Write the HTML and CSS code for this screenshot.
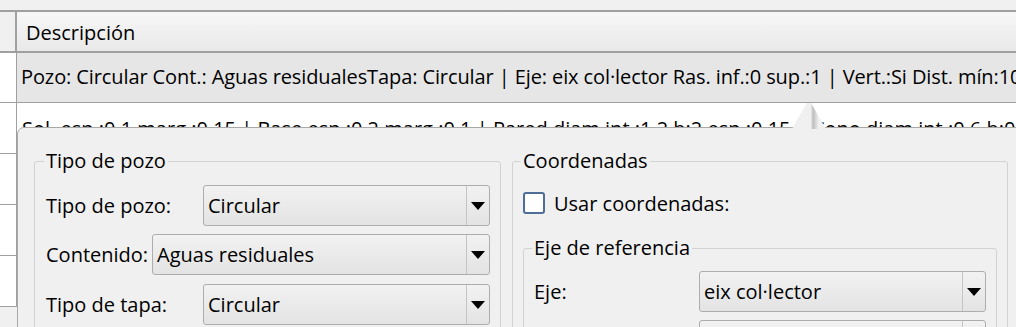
FILE: index.html
```html
<!DOCTYPE html>
<html lang="es">
<head>
<meta charset="utf-8">
<link rel="stylesheet" href="styles.css">
</head>
<body>
<div class="page">
  <div class="topstrip"></div>
  <div class="table">
    <div class="row header">
      <div class="gutter"></div>
      <div class="cell">Descripción</div>
    </div>
    <div class="row sel">
      <div class="gutter"></div>
      <div class="cell">Pozo: Circular Cont.: Aguas residualesTapa: Circular | Eje: eix col·lector Ras. inf.:0 sup.:1 | Vert.:Si Dist. mín:10</div>
    </div>
    <div class="row">
      <div class="gutter"></div>
      <div class="cell">Sol. esp.:0.1 marg.:0.15 | Base esp.:0.2 marg.:0.1 | Pared diam.int.:1.2 h:2 esp.:0.15 | Cono diam.int.:0.6 h:0.8 esp.:0.15</div>
    </div>
    <div class="row"><div class="gutter"></div><div class="cell"></div></div>
    <div class="row"><div class="gutter"></div><div class="cell"></div></div>
    <div class="row"><div class="gutter"></div><div class="cell"></div></div>
  </div>

  <div class="popover">
    <div class="arrow"></div>
    <div class="pop-body">
      <fieldset class="group group-left">
        <legend>Tipo de pozo</legend>
        <div class="form-row">
          <span class="lbl wide">Tipo de pozo:</span>
          <div class="combo"><span class="combo-text">Circular</span><span class="combo-btn"><span class="tri"></span></span></div>
        </div>
        <div class="form-row">
          <span class="lbl">Contenido:</span>
          <div class="combo"><span class="combo-text">Aguas residuales</span><span class="combo-btn"><span class="tri"></span></span></div>
        </div>
        <div class="form-row">
          <span class="lbl wide">Tipo de tapa:</span>
          <div class="combo"><span class="combo-text">Circular</span><span class="combo-btn"><span class="tri"></span></span></div>
        </div>
      </fieldset>
      <fieldset class="group group-right">
        <legend>Coordenadas</legend>
        <label class="check-row">
          <span class="checkbox"></span>
          <span>Usar coordenadas:</span>
        </label>
        <fieldset class="group inner">
          <legend>Eje de referencia</legend>
          <div class="form-row">
            <span class="lbl eje">Eje:</span>
            <div class="combo"><span class="combo-text">eix col·lector</span><span class="combo-btn"><span class="tri"></span></span></div>
          </div>
          <div class="form-row">
            <span class="lbl eje"></span>
            <div class="combo"><span class="combo-text"></span><span class="combo-btn"><span class="tri"></span></span></div>
          </div>
        </fieldset>
      </fieldset>
    </div>
  </div>
</div>
</body>
</html>
```

FILE: styles.css
```css
* { box-sizing: border-box; }
html, body {
  margin: 0;
  padding: 0;
  width: 1016px;
  height: 327px;
  overflow: hidden;
  background: #f0f0f0;
  font-family: "Open Sans", "Noto Sans", sans-serif;
  font-size: 20px;
  color: #000;
}
.page {
  position: relative;
  width: 1016px;
  height: 327px;
  overflow: hidden;
}
.topstrip {
  height: 10px;
  background: #f0f0f0;
}
.table {
  border-top: 2px solid #a0a0a0;
  background: #fff;
}
.row {
  display: flex;
  height: 51px;
  border-bottom: 1px solid #a0a0a0;
}
.row .gutter {
  width: 17px;
  flex: none;
  border-right: 1px solid #a0a0a0;
  background: #fff;
}
.row .cell {
  flex: 1;
  display: flex;
  align-items: center;
  padding-left: 5px;
  white-space: nowrap;
  overflow: hidden;
  background: #fff;
}
.row.header {
  height: 41px;
  border-bottom: 2px solid #a0a0a0;
}
.row.header .gutter {
  background: #f0f0f0;
  border-right: 2px solid #a0a0a0;
}
.row.header .cell {
  padding-left: 9px;
  padding-top: 1px;
  background: linear-gradient(#f7f7f7, #e9e9e9);
}
.row.sel { height: 50px; }
.row.sel .cell {
  background: #e6e6e6;
  padding-left: 4px;
  padding-bottom: 2px;
  letter-spacing: -0.1px;
}

.popover {
  position: absolute;
  left: 17px;
  top: 127px;
  width: 1040px;
  height: 260px;
  background: #f0f0f0;
  border: 1px solid #a8a8a8;
  border-radius: 7px 7px 0 0;
}
.arrow {
  position: absolute;
  left: 774px;
  top: -25px;
  width: 34px;
  height: 26px;
  background: linear-gradient(90deg, #f0f0f0 55%, #bdbdbd 62%, #f0f0f0 78%);
  clip-path: polygon(0 100%, 43% 0, 56% 0, 100% 100%);
}
.pop-body {
  display: flex;
  gap: 11px;
  padding: 20px 0 0 16px;
}
.group {
  margin: 0;
  border: 1px solid #d2d2d2;
  border-radius: 3px;
  padding: 0 10px 0 11px;
}
.group legend {
  padding: 0 2px;
  margin-left: -2px;
  line-height: 26px;
}
.group-left {
  width: 467px;
  height: 200px;
}
.group-right {
  width: 496px;
  height: 200px;
  padding-left: 10px;
}
.form-row {
  display: flex;
  align-items: center;
  height: 41px;
  margin-bottom: 8px;
}
.group-left .form-row:first-of-type { margin-top: 11px; }
.group-left .form-row:nth-of-type(2) { margin-bottom: 9px; }
.lbl {
  white-space: nowrap;
  margin-right: 4px;
}
.lbl.wide { width: 157px; margin-right: 0; }
.lbl.eje { width: 165px; margin-right: 0; }
.combo {
  flex: 1;
  height: 41px;
  display: flex;
  border: 1px solid #adadad;
  border-radius: 3px;
  background: linear-gradient(#f2f2f2, #e3e3e3);
}
.combo-text {
  flex: 1;
  display: flex;
  align-items: center;
  padding-left: 4px;
  white-space: nowrap;
}
.combo-btn {
  width: 23px;
  flex: none;
  border-left: 1px solid #c4c4c4;
  display: flex;
  align-items: center;
  justify-content: center;
}
.tri {
  width: 0;
  height: 0;
  border-left: 7px solid transparent;
  border-right: 7px solid transparent;
  border-top: 8px solid #000;
}
.check-row {
  display: flex;
  align-items: center;
  gap: 9px;
  height: 24px;
  margin-top: 17px;
}
.checkbox {
  width: 22px;
  height: 22px;
  border: 2px solid #4e6e98;
  border-radius: 3px;
  background: #fff;
}
.group.inner {
  margin-top: 20px;
  height: 120px;
  padding-left: 10px;
  padding-right: 10px;
}
.group.inner .form-row:first-of-type { margin-top: 10px; }
```
